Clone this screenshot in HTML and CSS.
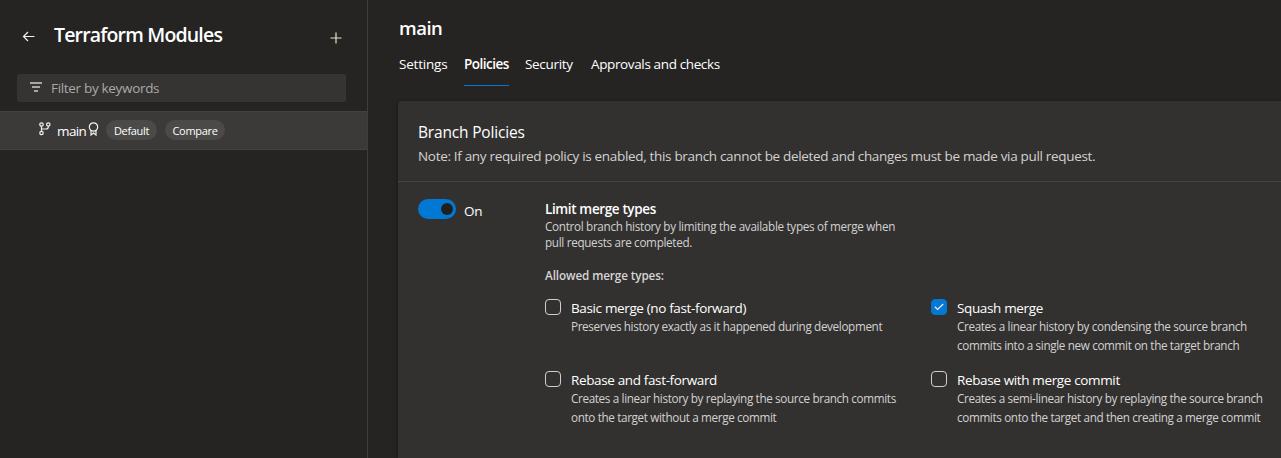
FILE: index.html
```html
<!DOCTYPE html>
<html lang="en">
<head>
<meta charset="utf-8">
<title>Terraform Modules - Branch policies</title>
<link rel="stylesheet" href="styles.css">
</head>
<body>
<div class="app">
  <aside class="sidebar">
    <header class="sidebar-header">
      <svg class="back" width="14" height="12" viewBox="0 0 14 12"><path d="M12.500 6.500H1.500M6 2L1.500 6.500L6 11"/></svg>
      <h1 class="sidebar-title"><span>Terraform Modules</span></h1>
      <svg class="add" width="12" height="12" viewBox="0 0 12 12"><path d="M6 .5V11.500M.5 6H11.500"/></svg>
    </header>
    <div class="filter">
      <svg class="filter-icon" width="13" height="10" viewBox="0 0 13 10"><path d="M0 1H12M2 5H10M4 9H8"/></svg>
      <span class="filter-text">Filter by keywords</span>
    </div>
    <div class="branch">
      <svg class="branch-icon" width="12" height="14" viewBox="0 0 12 14"><circle cx="2.500" cy="2.500" r="1.700"/><circle cx="9.300" cy="2.500" r="1.700"/><circle cx="2.500" cy="11" r="1.700"/><path d="M2.500 4.200V9.300M9.300 4.200V5C9.300 6.500 8.500 7 7 7H2.500"/></svg>
      <span class="branch-name">main</span>
      <svg class="ribbon" width="11" height="14" viewBox="0 0 11 14"><circle cx="5.500" cy="5" r="4.200"/><path d="M3 8.500V13L5.500 11L8 13V8.500"/></svg>
      <span class="pill pill-default">Default</span>
      <span class="pill pill-compare">Compare</span>
    </div>
  </aside>
  <main class="content">
    <h2 class="page-title"><span>main</span></h2>
    <nav class="tabs">
      <span class="tab tab-settings">Settings</span>
      <span class="tab tab-policies active">Policies</span>
      <span class="tab tab-security">Security</span>
      <span class="tab tab-checks">Approvals and checks</span>
    </nav>
    <section class="card">
      <header class="card-header">
        <h3 class="card-title">Branch Policies</h3>
        <p class="card-note">Note: If any required policy is enabled, this branch cannot be deleted and changes must be made via pull request.</p>
      </header>
      <div class="policy">
        <div class="switch">
          <span class="toggle"><span class="knob"></span></span>
          <span class="switch-label">On</span>
        </div>
        <div class="policy-body">
          <h4 class="policy-title">Limit merge types</h4>
          <p class="policy-text">Control branch history by limiting the available types of merge when<br>pull requests are completed.</p>
          <h5 class="allowed">Allowed merge types:</h5>
          <div class="options">
            <div class="option">
              <span class="box"></span>
              <div class="option-body">
                <div class="option-title">Basic merge (no fast-forward)</div>
                <p class="option-text">Preserves history exactly as it happened during development</p>
              </div>
            </div>
            <div class="option">
              <span class="box checked"><svg width="10" height="8" viewBox="0 0 10 8"><path d="M.8 3.800L3.600 6.500L9.200 1"/></svg></span>
              <div class="option-body">
                <div class="option-title">Squash merge</div>
                <p class="option-text">Creates a linear history by condensing the source branch<br>commits into a single new commit on the target branch</p>
              </div>
            </div>
            <div class="option">
              <span class="box"></span>
              <div class="option-body">
                <div class="option-title">Rebase and fast-forward</div>
                <p class="option-text">Creates a linear history by replaying the source branch commits<br>onto the target without a merge commit</p>
              </div>
            </div>
            <div class="option">
              <span class="box"></span>
              <div class="option-body">
                <div class="option-title">Rebase with merge commit</div>
                <p class="option-text">Creates a semi-linear history by replaying the source branch<br>commits onto the target and then creating a merge commit</p>
              </div>
            </div>
          </div>
        </div>
      </div>
    </section>
  </main>
</div>
</body>
</html>
```

FILE: styles.css
```css
* { box-sizing: border-box; }
body {
  margin: 0;
  background: #252423;
  color: #fff;
  font: 13.5px/20px "Open Sans", "Noto Sans", sans-serif;
  letter-spacing: -0.32px;
  overflow: hidden;
}
h1, h2, h3, h4, h5, p { margin: 0; font-weight: 400; }
svg { display: block; flex: none; fill: none; stroke: #f0f0ef; stroke-width: 1.2; }
.app { display: flex; width: 1281px; height: 458px; white-space: nowrap; }

.sidebar { width: 368px; flex: none; border-right: 1px solid #3f3e3c; }
.sidebar-header { display: flex; align-items: center; height: 74px; padding: 0 25px 0 22px; }
.back { margin-top: -2px; }
.sidebar-title { margin: -5px 0 0 18px; font-size: 19.5px; line-height: 28px; font-weight: 600; letter-spacing: -0.82px; }
.add { margin: 2px 0 0 auto; stroke: #f0dfc0; }
.filter { display: flex; align-items: center; width: 329px; height: 28px; margin-left: 17px; padding-left: 13px; background: #353432; border-radius: 2px; color: #aaa9a7; }
.filter-icon { stroke: #cccbc9; stroke-width: 1.6; margin-top: -2px; }
.filter-text { margin-left: 8px; }
.branch { display: flex; align-items: center; height: 39px; margin-top: 9px; padding-left: 39px; background: #3b3a38; border-top: 1px solid #42413f; border-bottom: 1px solid #42413f; }
.branch-icon { margin-top: -3px; }
.branch-name { margin: 0 0 0 6px; width: 31px; letter-spacing: -0.6px; }
.ribbon { margin-top: -3px; }
.pill { height: 20px; margin-top: -1px; border-radius: 10px; background: #4b4a49; font-size: 11px; line-height: 21px; text-align: center; }
.pill-default { width: 51px; margin-left: 7px; }
.pill-compare { width: 60px; margin-left: 8px; }

.content { flex: 1; min-width: 0; padding-left: 30px; }
.page-title { margin: 16px 0 0 1px; font-size: 18.5px; line-height: 24px; font-weight: 600; letter-spacing: -0.5px; }
.tabs { display: flex; height: 32px; margin: 14px 0 15px 1px; }
.tab { height: 32px; }
.tab-settings { width: 65px; letter-spacing: -0.2px; }
.tab-policies { width: 45px; }
.tab-security { width: 82px; padding-left: 16px; }
.tab-checks { letter-spacing: -0.37px; }
.active { font-weight: 600; letter-spacing: -0.5px; border-bottom: 1px solid #0078d4; }

.card { height: 357px; background: #323130; border-top-left-radius: 4px; box-shadow: 0 1px 4px rgba(0, 0, 0, .45); }
.card-header { height: 81px; padding: 20px 0 0 20px; border-bottom: 1px solid #454443; }
.card-title { font-size: 15.5px; line-height: 22px; letter-spacing: -0.18px; }
.card-note { margin-top: 3px; color: #d2d1d0; }
.policy { display: flex; padding: 17px 0 0 20px; }
.switch { display: flex; width: 127px; flex: none; }
.toggle { display: flex; justify-content: flex-end; align-items: center; width: 38px; height: 20px; padding-right: 3px; border-radius: 10px; background: #0078d4; }
.knob { width: 12px; height: 12px; border-radius: 50%; background: #20201f; }
.switch-label { margin: 2px 0 0 8px; }
.policy-title { font-weight: 600; letter-spacing: -0.37px; }
.policy-text { margin-top: -1px; color: #d2d1d0; font-size: 11.7px; line-height: 16px; letter-spacing: -0.31px; }
.allowed { margin-top: 15px; color: #d6d5d4; font-size: 11.7px; line-height: 20px; font-weight: 600; letter-spacing: -0.1px; }
.options { display: grid; grid-template-columns: 386px 350px; grid-auto-rows: 72px; margin-top: 13px; }
.option { display: flex; }
.box { width: 16px; height: 16px; margin-top: 1px; flex: none; border: 1px solid #cfcecd; border-radius: 4px; }
.checked { display: flex; align-items: center; justify-content: center; background: #0078d4; border-color: #0078d4; }
.option-body { margin-left: 10px; }
.option-title { letter-spacing: -0.36px; }
.option-text { margin-top: -1px; color: #d2d1d0; font-size: 11.7px; line-height: 19px; letter-spacing: -0.35px; }
```
